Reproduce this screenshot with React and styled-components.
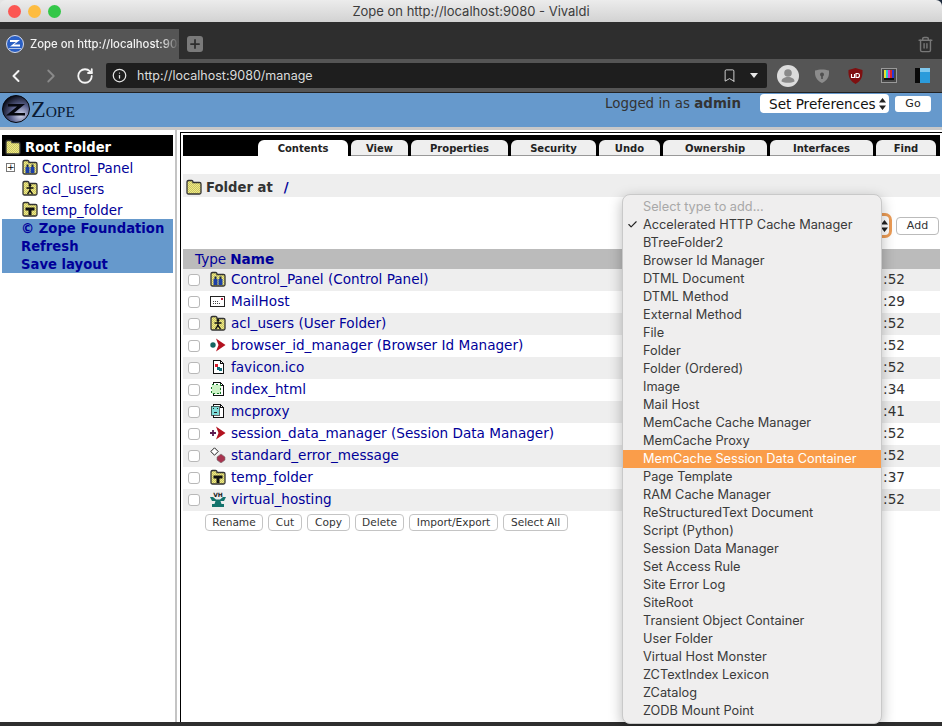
import React from 'react';
import styled, { createGlobalStyle } from 'styled-components';
import { ChevronLeft, ChevronRight, RotateCw, Info, Bookmark, Trash2, Plus, Check } from 'lucide-react';

const GlobalStyle = createGlobalStyle`
    html, body {
        margin: 0;
        padding: 0;
        background: #fff;
        overflow: hidden;
    }
`;

const Window = styled.div`
    position: relative;
    width: 942px;
    height: 726px;
    display: flex;
    flex-direction: column;
    overflow: hidden;
    background: linear-gradient(to right, #e4e4e4 50%, #1c2a3c 50%);
    font-family: 'DejaVu Sans', Verdana, sans-serif;
`;

const TitleBar = styled.div`
    height: 22px;
    flex: none;
    display: flex;
    align-items: center;
    padding: 0 0 0 8px;
    gap: 7px;
    border-radius: 6px 6px 0 0;
    background: linear-gradient(#ececec, #d2d2d2);
`;

const TrafficLight = styled.span`
    width: 13px;
    height: 13px;
    border-radius: 50%;
    background: ${p => p.$color};
`;

const TitleText = styled.div`
    position: absolute;
    top: 3px;
    left: 0;
    right: 0;
    text-align: center;
    font: 13px Inter, 'Liberation Sans', sans-serif;
    color: #3c3c3c;
`;

const TabStrip = styled.div`
    height: 37px;
    flex: none;
    display: flex;
    align-items: flex-end;
    background: #2e2e2e;
`;

const BrowserTab = styled.div`
    width: 179px;
    height: 30px;
    flex: none;
    display: flex;
    align-items: center;
    padding-left: 6px;
    gap: 6px;
    box-sizing: border-box;
    background: #555;
    overflow: hidden;
`;

const FaviconSlot = styled.span`
    flex: none;
    display: flex;
`;

const BrowserTabTitle = styled.span`
    font: 500 11.3px Inter, 'Liberation Sans', sans-serif;
    color: #f2f2f2;
    white-space: nowrap;
    overflow: hidden;
    -webkit-mask-image: linear-gradient(to right, #000 88%, transparent);
    mask-image: linear-gradient(to right, #000 88%, transparent);
`;

const NewTab = styled.div`
    width: 16px;
    height: 16px;
    margin: 0 0 7px 8px;
    border-radius: 3px;
    background: #7a7a7a;
    display: flex;
    align-items: center;
    justify-content: center;
    color: #2e2e2e;
`;

const TrashSlot = styled.div`
    margin: 0 8px 6px auto;
    color: #777;
    display: flex;
`;

const AddressBar = styled.div`
    height: 34px;
    flex: none;
    display: flex;
    align-items: center;
    box-sizing: border-box;
    background: #555;
    border-bottom: 1px solid #222;
    padding-left: 6px;
`;

const NavSlot = styled.div`
    width: ${p => p.$w}px;
    flex: none;
    display: flex;
    justify-content: center;
    color: ${p => (p.$dim ? '#8a8a8a' : '#f4f4f4')};
`;

const UrlField = styled.div`
    width: 661px;
    height: 25px;
    flex: none;
    margin: 0 0 0 12px;
    display: flex;
    align-items: center;
    padding: 0 9px 0 6px;
    box-sizing: border-box;
    border-radius: 2px;
    background: #1e1e1e;
    color: #e6e6e6;
`;

const UrlText = styled.span`
    margin-left: 10px;
    flex: 1;
    font: 12.5px Inter, 'Liberation Sans', sans-serif;
    color: #dcdcdc;
`;

const DropCaret = styled.span`
    margin-left: 13px;
    width: 0;
    height: 0;
    border-left: 4px solid transparent;
    border-right: 4px solid transparent;
    border-top: 5px solid #e8e8e8;
`;

const Extensions = styled.div`
    display: flex;
    align-items: center;
    margin-left: 10px;
    gap: 18px;
`;

const ProfileSlot = styled.span`
    display: flex;
    margin-right: -3px;
`;

const TopBand = styled.div`
    height: 34px;
    flex: none;
    display: flex;
    align-items: flex-start;
    background: #6699cc;
    border-bottom: 3px solid #c8c8c8;
`;

const Logo = styled.div`
    display: flex;
    align-items: center;
    margin: 2px 0 0 2px;
    color: #0b1a33;
`;

const LogoWord = styled.span`
    display: flex;
    align-items: baseline;
    margin-left: 1px;
    font-family: 'Liberation Serif', serif;
`;

const LogoBig = styled.span`
    font-size: 24px;
`;

const LogoSmall = styled.span`
    font-size: 15.5px;
`;

const LoggedIn = styled.div`
    margin: 2px 0 0 auto;
    font-size: 13.4px;
    color: #333;
    line-height: 17px;
`;

const PrefSelect = styled.div`
    margin: 1px 0 0 19px;
    width: 129px;
    height: 19px;
    box-sizing: border-box;
    display: flex;
    align-items: center;
    justify-content: space-between;
    padding: 0 2px 0 9px;
    border-radius: 4px;
    background: #fff;
    font: 13.6px 'DejaVu Sans', sans-serif;
    color: #111;
`;

const GoButton = styled.div`
    margin: 3px 11px 0 6px;
    width: 36px;
    height: 16px;
    border-radius: 3px;
    background: #fff;
    font-size: 11px;
    line-height: 16px;
    text-align: center;
    color: #222;
`;

const Frames = styled.div`
    flex: 1;
    display: flex;
    min-height: 0;
    background: #fff;
`;

const LeftFrame = styled.div`
    width: 175px;
    flex: none;
    box-sizing: border-box;
    padding: 5px 2px 0;
`;

const Splitter = styled.div`
    width: 2px;
    flex: none;
    margin-right: 3px;
    background: #c4c4c4;
`;

const RightFrame = styled.div`
    flex: 1;
    min-width: 0;
    border-left: 1px solid #000;
    border-top: 1px solid #000;
    padding: 2px 2px 0 2px;
    margin-top: 2px;
`;

const RootBar = styled.div`
    height: 21px;
    box-sizing: border-box;
    display: flex;
    align-items: center;
    gap: 4px;
    padding: 3px 0 0 3px;
    background: #000;
    color: #fff;
    font-weight: bold;
    font-size: 13.2px;
`;

const TreeRow = styled.div`
    height: 21px;
    box-sizing: border-box;
    display: flex;
    align-items: flex-start;
    padding: 3px 0 0 20px;
    gap: 4px;
    position: relative;
`;

const Expander = styled.span`
    position: absolute;
    left: 4px;
    top: 7px;
    width: 7px;
    height: 7px;
    border: 1px solid #777;
    font: 9px/7px 'DejaVu Sans', sans-serif;
    text-align: center;
    color: #000;
`;

const TreeLink = styled.span`
    margin-top: 2px;
    font-size: 13.4px;
    color: #000099;
`;

const FootBox = styled.div`
    background: #6699cc;
    padding: 1px 0 0 19px;
    height: 54px;
    box-sizing: border-box;
`;

const FootLink = styled.div`
    height: 18px;
    line-height: 18px;
    font-size: 13.2px;
    font-weight: bold;
    white-space: nowrap;
    color: #000099;
`;

const TabBar = styled.div`
    height: 21px;
    display: flex;
    justify-content: flex-end;
    align-items: flex-end;
    gap: 3px;
    padding-right: 4px;
    background: #000;
`;

const ManageTab = styled.div`
    width: ${p => p.$w}px;
    height: 16px;
    box-sizing: border-box;
    border-radius: 6px 6px 0 0;
    border-bottom: ${p => (p.$active ? 'none' : '1px solid #999')};
    background: ${p => (p.$active ? '#fff' : '#efefef')};
    font-size: 10px;
    font-weight: bold;
    line-height: 17px;
    text-align: center;
    color: #222;
`;

const FolderBar = styled.div`
    margin-top: 18px;
    height: 23px;
    box-sizing: border-box;
    display: flex;
    align-items: center;
    gap: 4px;
    padding: 3px 0 0 3px;
    background: #eee;
    color: #333;
    font-weight: bold;
    font-size: 13.2px;
`;

const PathLink = styled.span`
    margin-left: 7px;
    color: #000099;
`;

const AddRow = styled.div`
    height: 52px;
    display: flex;
    justify-content: flex-end;
    align-items: flex-start;
    padding-top: 17px;
    box-sizing: border-box;
    padding-right: 1px;
`;

const TypeSelect = styled.div`
    width: 250px;
    height: 19px;
    margin: 2px 0 0 0;
    box-sizing: border-box;
    display: flex;
    align-items: center;
    justify-content: flex-end;
    padding-right: 0;
    border-radius: 4px;
    background: #fff;
    box-shadow: 0 0 0 3px #ec9c55;
`;

const AddButton = styled.div`
    margin: 3px 0 0 7px;
    width: 43px;
    height: 18px;
    box-sizing: border-box;
    border: 1px solid #bbb;
    border-radius: 4px;
    font-size: 11px;
    line-height: 16px;
    text-align: center;
    color: #333;
`;

const TableHead = styled.div`
    height: 20px;
    display: flex;
    align-items: center;
    padding-left: 12px;
    background: #bbb;
    color: #000099;
    font-size: 13.6px;
`;

const HeadName = styled.span`
    margin-left: 4px;
    font-weight: bold;
`;

const Row = styled.div`
    height: 22px;
    box-sizing: border-box;
    display: flex;
    align-items: center;
    padding: 0 35px 2px 5px;
    background: ${p => (p.$odd ? '#eee' : '#fff')};
`;

const RowCheck = styled.span`
    width: 12px;
    height: 12px;
    flex: none;
    margin-top: 2px;
    box-sizing: border-box;
    border: 1px solid #b8b8b8;
    border-radius: 3px;
    background: #fff;
`;

const RowIcon = styled.span`
    width: 16px;
    height: 16px;
    margin: 0 5px 0 10px;
    flex: none;
    display: flex;
`;

const RowName = styled.span`
    flex: 1;
    font-size: 13.6px;
    color: #000099;
    white-space: nowrap;
`;

const RowTime = styled.span`
    font-size: 13.6px;
    color: #333;
`;

const ActionRow = styled.div`
    display: flex;
    gap: 5px;
    padding: 3px 0 0 22px;
`;

const ActionButton = styled.div`
    width: ${p => p.$w}px;
    height: 17px;
    box-sizing: border-box;
    border: 1px solid #c4c4c4;
    border-radius: 4px;
    background: #fff;
    font-size: 10.6px;
    line-height: 15px;
    text-align: center;
    color: #333;
`;

const BottomEdge = styled.div`
    height: 4px;
    flex: none;
    background: #2e2e2e;
`;

const TypeMenu = styled.div`
    position: absolute;
    left: 622px;
    top: 194px;
    width: 260px;
    height: 530px;
    box-sizing: border-box;
    padding-top: 3px;
    border: 1px solid #c9c9c9;
    border-radius: 8px;
    background: #efeeee;
    box-shadow: 0 4px 14px rgba(0, 0, 0, 0.28);
    font: 12.75px Inter, 'Liberation Sans', sans-serif;
    color: #333;
`;

const MenuItem = styled.div`
    position: relative;
    height: 18px;
    line-height: 18px;
    padding-left: 20px;
    white-space: nowrap;
    background: ${p => (p.$active ? '#fa9d4a' : 'transparent')};
    color: ${p => (p.$active ? '#fff' : p.$muted ? '#a8a8a8' : '#3a3a3a')};
`;

const MenuCheck = styled.span`
    position: absolute;
    left: 4px;
    top: 3px;
    display: flex;
    color: #222;
`;

const Dither = () => (
    <pattern id="dither" width="2" height="2" patternUnits="userSpaceOnUse">
        <rect width="2" height="2" fill="#f6f07a" />
        <rect width="1" height="1" fill="#c4c070" />
        <rect x="1" y="1" width="1" height="1" fill="#c4c070" />
    </pattern>
);

const FolderIcon = ({ children }) => (
    <svg width="16" height="16" viewBox="0 0 16 16" style={{ flex: 'none' }}>
        <defs>
            <Dither />
        </defs>
        <path
            d="M1 3.500Q1 1.500 2.500 1.500H5.500Q7 1.500 7 3.500H13.500Q15 3.500 15 5V13.500Q15 15 13.500 15H2.500Q1 15 1 13.500Z"
            fill="url(#dither)"
            stroke="#333"
            strokeWidth="1.300"
        />
        {children}
    </svg>
);

const PageIcon = ({ children }) => (
    <svg width="16" height="16" viewBox="0 0 16 16" shapeRendering="crispEdges">
        <path d="M3.500 1.500h7l3 3v10h-10z" fill="#fff" stroke="#111" />
        <path d="M10.500 1.500v3h3" fill="none" stroke="#111" />
        {children}
    </svg>
);

const PanelGlyph = () => (
    <>
        <rect x="3.500" y="8" width="4" height="6" fill="#1c3fa8" />
        <rect x="8.500" y="8" width="4" height="6" fill="#1c3fa8" />
        <rect x="4.500" y="5.500" width="2" height="2.500" fill="#1a2a50" />
        <rect x="9.500" y="5.500" width="2" height="2.500" fill="#1a2a50" />
    </>
);

const UserGlyph = () => (
    <>
        <circle cx="8" cy="5.500" r="1.400" fill="#111" />
        <path d="M4.500 8h7M8 7v3.500M8 10.500l-2.500 3.500M8 10.500l2.500 3.500" stroke="#111" strokeWidth="1.300" fill="none" />
    </>
);

const TempGlyph = () => <path d="M3.500 6.500h9v3h-3V14h-3V9.500h-3z" fill="#111" />;

const MailIcon = () => (
    <svg width="16" height="16" viewBox="0 0 16 16" shapeRendering="crispEdges">
        <rect x="0.500" y="3.500" width="14" height="10" fill="#fff" stroke="#222" />
        <rect x="11" y="5" width="2" height="2" fill="#c02040" />
        <path d="M3 8.500h5M3 10.500h8" stroke="#444" strokeDasharray="1 1" />
    </svg>
);

const ArrowManagerIcon = ({ plus }) => (
    <svg width="16" height="16" viewBox="0 0 16 16">
        <path d="M6 1.500L15.500 8 6 14.500 8.500 8z" fill="#b3121f" />
        {plus ? (
            <path d="M0 8h6M3 5v6" stroke="#5c1a50" strokeWidth="1.800" />
        ) : (
            <circle cx="3" cy="8" r="2.700" fill="#14645f" />
        )}
    </svg>
);

const FaviconIcon = () => (
    <PageIcon>
        <rect x="5" y="5" width="3" height="3" fill="#d81b2a" />
        <path d="M7 8h3v1h2v3H9v-1H7z" fill="#146d78" />
    </PageIcon>
);

const HtmlIcon = () => (
    <PageIcon>
        <rect x="1.500" y="3.500" width="9" height="9" fill="#cdf3c6" stroke="#197a2a" strokeDasharray="2 2" />
    </PageIcon>
);

const ProxyIcon = () => (
    <PageIcon>
        <rect x="1" y="3" width="8" height="9" fill="#7fdcd8" stroke="#222" strokeWidth="0.700" />
        <path d="M3 5.500h1M7 5.500h1M4 9h3" stroke="#222" />
    </PageIcon>
);

const ErrorIcon = () => (
    <svg width="16" height="16" viewBox="0 0 16 16">
        <path d="M4.500 0.800L0.800 4.500l3.700 3.700L8.200 4.500z" fill="#fff" stroke="#222" />
        <path d="M11 7l4 3v3l-4 3-4-3v-3z" fill="#a8344f" stroke="#777" strokeWidth="0.600" />
    </svg>
);

const HostingIcon = () => (
    <svg width="16" height="16" viewBox="0 0 16 16">
        <text x="8" y="5.500" textAnchor="middle" fontSize="6" fontWeight="bold" fill="#222" fontFamily="DejaVu Sans">VH</text>
        <path d="M0 6h3l3 2.500h4L13 6h3l-2 4h-3.500l1 3H14v3H2v-3h2.500l1-3H2z" fill="#14736c" />
    </svg>
);

const LogoMark = () => (
    <svg width="28" height="28" viewBox="0 0 28 28">
        <defs>
            <radialGradient id="orb" cx="0.68" cy="0.72" r="0.75">
                <stop offset="0" stopColor="#d4d8ee" />
                <stop offset="0.5" stopColor="#5b628e" />
                <stop offset="1" stopColor="#0a0d18" />
            </radialGradient>
        </defs>
        <circle cx="14" cy="14" r="13.500" fill="url(#orb)" stroke="#05070e" />
        <path d="M6 9h17l-11 9h11v2.500H4l11-9H6z" fill="#06080f" />
    </svg>
);

const TabFavicon = () => (
    <svg width="18" height="18" viewBox="0 0 18 18">
        <circle cx="9" cy="9" r="8.500" fill="#2a5fc4" stroke="#d6dcec" />
        <path d="M4 5h10L8 9.500h6v2H4l6-4.500H4z" fill="#fff" />
        <path d="M3 13.500h12" stroke="#b6c6e6" />
    </svg>
);

const ProfileIcon = () => (
    <svg width="22" height="22" viewBox="0 0 22 22">
        <circle cx="11" cy="11" r="11" fill="#dcdcdc" />
        <circle cx="11" cy="8" r="3.800" fill="#8a8a8a" />
        <path d="M4.500 16.500c0-3 3-4.500 6.500-4.500s6.500 1.500 6.500 4.500c-3 1.800-10 1.800-13 0z" fill="#8a8a8a" />
    </svg>
);

const ShieldIcon = () => (
    <svg width="16" height="16" viewBox="0 0 16 16">
        <path d="M1 2.500c4-1.500 10-1.500 14 0 .4 6-1.500 10-7 12.500C2.500 12.500.6 8.500 1 2.500z" fill="#8c8c8c" />
        <circle cx="8" cy="6.500" r="2" fill="#505050" />
        <rect x="7.200" y="7" width="1.600" height="4" fill="#505050" />
    </svg>
);

const UblockIcon = () => (
    <svg width="15" height="16" viewBox="0 0 15 16">
        <path d="M7.500 0l7 2c.4 7-1.500 11-7 14C2 13 .1 9 .5 2z" fill="#7f0f10" />
        <path d="M3.500 6v3.500h3V6M8 5.500v4h1.500a2 2 0 000-4z" fill="none" stroke="#fff" strokeWidth="1.100" />
    </svg>
);

const ColorBarsIcon = () => (
    <svg width="16" height="16" viewBox="0 0 16 16" shapeRendering="crispEdges">
        <rect x="0.500" y="0.500" width="15" height="14" fill="#444" stroke="#999" />
        <rect x="3" y="2" width="2" height="8" fill="#e8e030" />
        <rect x="5" y="2" width="2" height="8" fill="#2ac8d8" />
        <rect x="7" y="2" width="2" height="8" fill="#d838c8" />
        <rect x="9" y="2" width="2" height="8" fill="#d82828" />
        <rect x="11" y="2" width="2" height="8" fill="#2838d8" />
        <rect x="3" y="10" width="10" height="2" fill="#111" />
    </svg>
);

const BookIcon = () => (
    <svg width="15" height="15" viewBox="0 0 15 15" shapeRendering="crispEdges">
        <rect x="0" y="0" width="5" height="15" fill="#0a0a0a" />
        <rect x="5" y="0" width="10" height="15" fill="#2b9bdb" />
        <rect x="5" y="0" width="10" height="4" fill="#7fc8ee" />
    </svg>
);

const Arrows = () => (
    <svg width="9" height="14" viewBox="0 0 9 14">
        <path d="M4.500 1L8 5.500H1zM4.500 13L1 8.500h7z" fill="#222" />
    </svg>
);

const tabs = [
    ['Contents', 90, true],
    ['View', 57],
    ['Properties', 97],
    ['Security', 85],
    ['Undo', 61],
    ['Ownership', 104],
    ['Interfaces', 103],
    ['Find', 60],
];

const rows = [
    ['Control_Panel (Control Panel)', <FolderIcon><PanelGlyph /></FolderIcon>, ':52'],
    ['MailHost', <MailIcon />, ':29'],
    ['acl_users (User Folder)', <FolderIcon><UserGlyph /></FolderIcon>, ':52'],
    ['browser_id_manager (Browser Id Manager)', <ArrowManagerIcon />, ':52'],
    ['favicon.ico', <FaviconIcon />, ':52'],
    ['index_html', <HtmlIcon />, ':34'],
    ['mcproxy', <ProxyIcon />, ':41'],
    ['session_data_manager (Session Data Manager)', <ArrowManagerIcon plus />, ':52'],
    ['standard_error_message', <ErrorIcon />, ':52'],
    ['temp_folder', <FolderIcon><TempGlyph /></FolderIcon>, ':37'],
    ['virtual_hosting', <HostingIcon />, ':52'],
];

const actions = [
    ['Rename', 58],
    ['Cut', 34],
    ['Copy', 43],
    ['Delete', 49],
    ['Import/Export', 89],
    ['Select All', 65],
];

const menuItems = [
    'Accelerated HTTP Cache Manager',
    'BTreeFolder2',
    'Browser Id Manager',
    'DTML Document',
    'DTML Method',
    'External Method',
    'File',
    'Folder',
    'Folder (Ordered)',
    'Image',
    'Mail Host',
    'MemCache Cache Manager',
    'MemCache Proxy',
    'MemCache Session Data Container',
    'Page Template',
    'RAM Cache Manager',
    'ReStructuredText Document',
    'Script (Python)',
    'Session Data Manager',
    'Set Access Rule',
    'Site Error Log',
    'SiteRoot',
    'Transient Object Container',
    'User Folder',
    'Virtual Host Monster',
    'ZCTextIndex Lexicon',
    'ZCatalog',
    'ZODB Mount Point',
];

const App = () => {
    return (
        <Window>
            <GlobalStyle />
            <TitleBar>
                <TrafficLight $color="#fc5753" />
                <TrafficLight $color="#fdbc40" />
                <TrafficLight $color="#33c748" />
                <TitleText>Zope on http://localhost:9080 - Vivaldi</TitleText>
            </TitleBar>
            <TabStrip>
                <BrowserTab>
                    <FaviconSlot>
                        <TabFavicon />
                    </FaviconSlot>
                    <BrowserTabTitle>Zope on http://localhost:9080/manage</BrowserTabTitle>
                </BrowserTab>
                <NewTab>
                    <Plus size={14} strokeWidth={3} />
                </NewTab>
                <TrashSlot>
                    <Trash2 size={17} />
                </TrashSlot>
            </TabStrip>
            <AddressBar>
                <NavSlot $w={20}>
                    <ChevronLeft size={22} strokeWidth={2.4} />
                </NavSlot>
                <NavSlot $w={50} $dim>
                    <ChevronRight size={22} strokeWidth={2} />
                </NavSlot>
                <NavSlot $w={18}>
                    <RotateCw size={18} strokeWidth={2.4} />
                </NavSlot>
                <UrlField>
                    <Info size={15} />
                    <UrlText>http://localhost:9080/manage</UrlText>
                    <Bookmark size={15} strokeWidth={1.4} />
                    <DropCaret />
                </UrlField>
                <Extensions>
                    <ProfileSlot>
                        <ProfileIcon />
                    </ProfileSlot>
                    <ShieldIcon />
                    <UblockIcon />
                    <ColorBarsIcon />
                    <BookIcon />
                </Extensions>
            </AddressBar>
            <TopBand>
                <Logo>
                    <LogoMark />
                    <LogoWord>
                        <LogoBig>Z</LogoBig>
                        <LogoSmall>OPE</LogoSmall>
                    </LogoWord>
                </Logo>
                <LoggedIn>
                    Logged in as <strong>admin</strong>
                </LoggedIn>
                <PrefSelect>
                    Set Preferences
                    <Arrows />
                </PrefSelect>
                <GoButton>Go</GoButton>
            </TopBand>
            <Frames>
                <LeftFrame>
                    <RootBar>
                        <FolderIcon />
                        Root Folder
                    </RootBar>
                    <TreeRow>
                        <Expander>+</Expander>
                        <FolderIcon><PanelGlyph /></FolderIcon>
                        <TreeLink>Control_Panel</TreeLink>
                    </TreeRow>
                    <TreeRow>
                        <FolderIcon><UserGlyph /></FolderIcon>
                        <TreeLink>acl_users</TreeLink>
                    </TreeRow>
                    <TreeRow>
                        <FolderIcon><TempGlyph /></FolderIcon>
                        <TreeLink>temp_folder</TreeLink>
                    </TreeRow>
                    <FootBox>
                        <FootLink>© Zope Foundation</FootLink>
                        <FootLink>Refresh</FootLink>
                        <FootLink>Save layout</FootLink>
                    </FootBox>
                </LeftFrame>
                <Splitter />
                <RightFrame>
                    <TabBar>
                        {tabs.map(([label, w, active]) => (
                            <ManageTab key={label} $w={w} $active={active}>
                                {label}
                            </ManageTab>
                        ))}
                    </TabBar>
                    <FolderBar>
                        <FolderIcon />
                        Folder at <PathLink>/</PathLink>
                    </FolderBar>
                    <AddRow>
                        <TypeSelect>
                            <Arrows />
                        </TypeSelect>
                        <AddButton>Add</AddButton>
                    </AddRow>
                    <TableHead>
                        Type<HeadName>Name</HeadName>
                    </TableHead>
                    {rows.map(([name, icon, time], i) => (
                        <Row key={name} $odd={i % 2 === 0}>
                            <RowCheck />
                            <RowIcon>{icon}</RowIcon>
                            <RowName>{name}</RowName>
                            <RowTime>{time}</RowTime>
                        </Row>
                    ))}
                    <ActionRow>
                        {actions.map(([label, w]) => (
                            <ActionButton key={label} $w={w}>
                                {label}
                            </ActionButton>
                        ))}
                    </ActionRow>
                </RightFrame>
            </Frames>
            <BottomEdge />
            <TypeMenu>
                <MenuItem $muted>Select type to add...</MenuItem>
                {menuItems.map((item, i) => (
                    <MenuItem key={item} $active={item === 'MemCache Session Data Container'}>
                        {i === 0 && (
                            <MenuCheck>
                                <Check size={11} strokeWidth={2.5} />
                            </MenuCheck>
                        )}
                        {item}
                    </MenuItem>
                ))}
            </TypeMenu>
        </Window>
    );
};

export default App;
